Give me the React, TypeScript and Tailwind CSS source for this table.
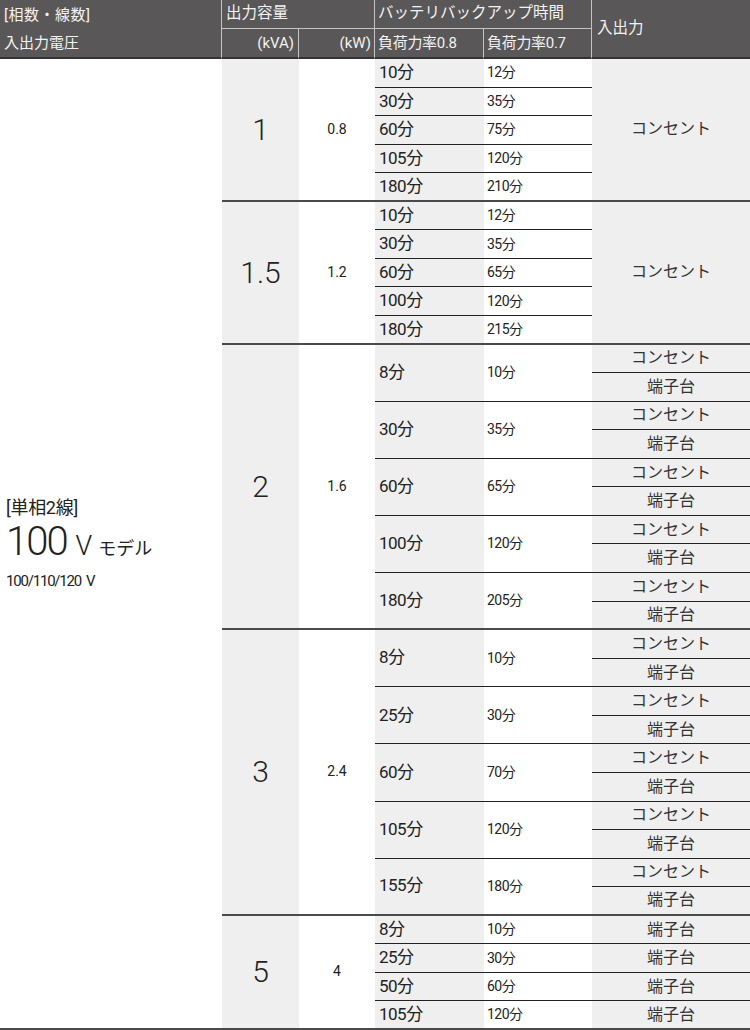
import React from 'react';

type Group = {
    kva: string;
    kw: string;
    rows: [string, string][];
    io: 'single' | 'pair' | 'terminal';
};

const groups: Group[] = [
    { kva: '1', kw: '0.8', io: 'single', rows: [['10分', '12分'], ['30分', '35分'], ['60分', '75分'], ['105分', '120分'], ['180分', '210分']] },
    { kva: '1.5', kw: '1.2', io: 'single', rows: [['10分', '12分'], ['30分', '35分'], ['60分', '65分'], ['100分', '120分'], ['180分', '215分']] },
    { kva: '2', kw: '1.6', io: 'pair', rows: [['8分', '10分'], ['30分', '35分'], ['60分', '65分'], ['100分', '120分'], ['180分', '205分']] },
    { kva: '3', kw: '2.4', io: 'pair', rows: [['8分', '10分'], ['25分', '30分'], ['60分', '70分'], ['105分', '120分'], ['155分', '180分']] },
    { kva: '5', kw: '4', io: 'terminal', rows: [['8分', '10分'], ['25分', '30分'], ['50分', '60分'], ['105分', '120分']] },
];

const spanCls: Record<number, string> = {
    2: 'row-span-2',
    4: 'row-span-4',
    5: 'row-span-5',
    10: 'row-span-10',
};

const groupLine = 'border-b-2 border-[#4a4a4a]';
const rowLine = 'border-b border-[#222]';
const gray = 'bg-[#efefef]';

const headCell = 'bg-[#595757] text-[#f2f2f2] flex items-center border-[#c4c4c4]';

const App: React.FC = () => {
    const cells: React.ReactNode[] = [];

    groups.forEach((g, gi) => {
        const pair = g.io === 'pair';
        const span = pair ? g.rows.length * 2 : g.rows.length;

        if (gi === 0) {
            // left column, spans the whole body
            cells.push(
                <div key="left" className={`row-span-[34] flex flex-col justify-center pl-[6px] text-[#222] ${groupLine}`}>
                    <div className="text-[18px] leading-[24px] tracking-[-0.3px]">[単相2線]</div>
                    <div className="flex items-baseline leading-[44px]">
                        <span className="text-[40px] font-light tracking-[-2px]">100</span>
                        <span className="text-[27px] font-light ml-[9px]">V</span>
                        <span className="text-[18px] ml-[6px]">モデル</span>
                    </div>
                    <div className="text-[15px] leading-[20px] tracking-[-1.2px]">100/110/120&nbsp;&nbsp;V</div>
                </div>
            );
        }

        cells.push(
            <div key={`kva${gi}`} className={`${spanCls[span]} ${gray} ${groupLine} flex items-center justify-center text-[30px] font-light text-[#222]`}>
                {g.kva}
            </div>
        );
        cells.push(
            <div key={`kw${gi}`} className={`${spanCls[span]} ${groupLine} flex items-center justify-center text-[14px] text-[#222]`}>
                {g.kw}
            </div>
        );

        g.rows.forEach(([a, b], ri) => {
            const last = ri === g.rows.length - 1;
            const line = last ? groupLine : rowLine;
            const rs = pair ? 'row-span-2' : '';
            cells.push(
                <div key={`a${gi}-${ri}`} className={`${rs} ${gray} ${line} flex items-center pl-[4px] text-[17px] tracking-[-0.5px] text-[#222]`}>
                    {a}
                </div>
            );
            cells.push(
                <div key={`b${gi}-${ri}`} className={`${rs} ${line} flex items-center pl-[3px] text-[14px] tracking-[-0.5px] text-[#222]`}>
                    {b}
                </div>
            );

            if (g.io === 'single') {
                if (ri === 0) {
                    cells.push(
                        <div key={`io${gi}`} className={`row-span-5 ${gray} ${groupLine} flex items-center justify-center text-[16px] text-[#333]`}>
                            コンセント
                        </div>
                    );
                }
            } else if (pair) {
                cells.push(
                    <div key={`c${gi}-${ri}`} className={`${gray} ${rowLine} flex items-center justify-center text-[16px] text-[#333]`}>
                        コンセント
                    </div>
                );
                cells.push(
                    <div key={`t${gi}-${ri}`} className={`${gray} ${line} flex items-center justify-center text-[16px] text-[#333]`}>
                        端子台
                    </div>
                );
            } else {
                cells.push(
                    <div key={`t${gi}-${ri}`} className={`${gray} ${line} flex items-center justify-center text-[16px] text-[#333]`}>
                        端子台
                    </div>
                );
            }
        });
    });

    return (
        <div className="w-[750px] h-[1030px] bg-white font-['Roboto','Noto_Sans_CJK_JP',sans-serif]">
            <div className="grid h-full grid-cols-[222px_77px_76px_109px_108px_158px] grid-rows-[29px_30px_repeat(34,minmax(0,1fr))]">
                {/* header row 1 */}
                <div className={`row-span-2 ${headCell} border-r border-b-2 !border-b-[#333] flex-col !items-start justify-center pl-[4px] text-[15px]`}>
                    <div className="h-[29px] flex items-center tracking-[0.5px]">[相数・線数]</div>
                    <div className="h-[27px] flex items-center">入出力電圧</div>
                </div>
                <div className={`col-span-2 ${headCell} border-r border-b pl-[4px] text-[15.5px]`}>出力容量</div>
                <div className={`col-span-2 ${headCell} border-r border-b pl-[3px] text-[15.5px]`}>バッテリバックアップ時間</div>
                <div className={`row-span-2 ${headCell} border-b-2 !border-b-[#333] pl-[5px] text-[15.5px]`}>入出力</div>

                {/* header row 2 */}
                <div className={`${headCell} border-r border-b-2 !border-b-[#333] justify-end pr-[4px] text-[15px]`}>(kVA)</div>
                <div className={`${headCell} border-r border-b-2 !border-b-[#333] justify-end pr-[3px] text-[15px]`}>(kW)</div>
                <div className={`${headCell} border-r border-b-2 !border-b-[#333] pl-[3px] text-[15px] tracking-[-0.3px]`}>負荷力率0.8</div>
                <div className={`${headCell} border-r border-b-2 !border-b-[#333] pl-[3px] text-[15px] tracking-[-0.3px]`}>負荷力率0.7</div>

                {cells}
            </div>
        </div>
    );
};

export default App;
